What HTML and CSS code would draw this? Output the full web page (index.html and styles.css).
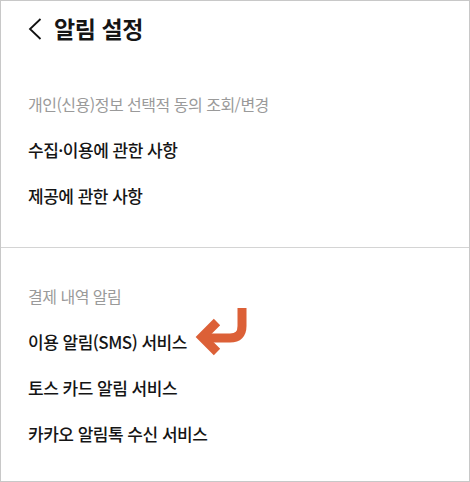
FILE: index.html
```html
<!DOCTYPE html>
<html lang="ko">
<head>
<meta charset="utf-8">
<link rel="stylesheet" href="styles.css">
</head>
<body>
<div class="screen">
  <header class="topbar">
    <svg class="back" width="14" height="22" viewBox="0 0 14 22"><path d="M12.5 1 L2 11 L12.5 21" fill="none" stroke="#111" stroke-width="1.8"/></svg>
    <h1 class="title">알림 설정</h1>
  </header>
  <section class="group group-first">
    <div class="group-title">개인(신용)정보 선택적 동의 조회/변경</div>
    <div class="item">수집·이용에 관한 사항</div>
    <div class="item">제공에 관한 사항</div>
  </section>
  <section class="group">
    <div class="group-title">결제 내역 알림</div>
    <div class="item item-marked">이용 알림(SMS) 서비스
      <svg class="mark" width="64" height="54" viewBox="0 0 64 54"><path d="M51 4 V22 Q51 34 39 34 H16" fill="none" stroke="#dc6037" stroke-width="9"/><path d="M26 18 L11 33 L26 48" fill="none" stroke="#dc6037" stroke-width="9" stroke-linejoin="miter"/></svg>
    </div>
    <div class="item">토스 카드 알림 서비스</div>
    <div class="item">카카오 알림톡 수신 서비스</div>
  </section>
</div>
</body>
</html>
```

FILE: styles.css
```css
html, body {
  margin: 0;
  padding: 0;
  background: #fff;
}
.screen {
  width: 470px;
  height: 482px;
  box-sizing: border-box;
  border: 1px solid #c8c8c8;
  font-family: "Noto Sans CJK KR", "Noto Sans", sans-serif;
  color: #151515;
  overflow: hidden;
}
.topbar {
  height: 55px;
  display: flex;
  align-items: center;
  padding-left: 27px;
  gap: 12px;
}
.back {
  display: block;
}
.title {
  margin: 0;
  font-size: 23px;
  font-weight: 700;
  letter-spacing: -0.4px;
  line-height: 1;
}
.group {
  padding: 26px 0 27px 27px;
}
.group-first {
  border-bottom: 1px solid #d4d4d4;
  padding-bottom: 28px;
}
.group-title {
  height: 45px;
  line-height: 45px;
  font-size: 16px;
  color: #9a9a9a;
  letter-spacing: -0.5px;
}
.item {
  height: 46px;
  line-height: 46px;
  font-size: 17px;
  font-weight: 500;
  letter-spacing: -0.5px;
}
.item-marked {
  position: relative;
}
.mark {
  position: absolute;
  left: 163px;
  top: -15px;
}
```
